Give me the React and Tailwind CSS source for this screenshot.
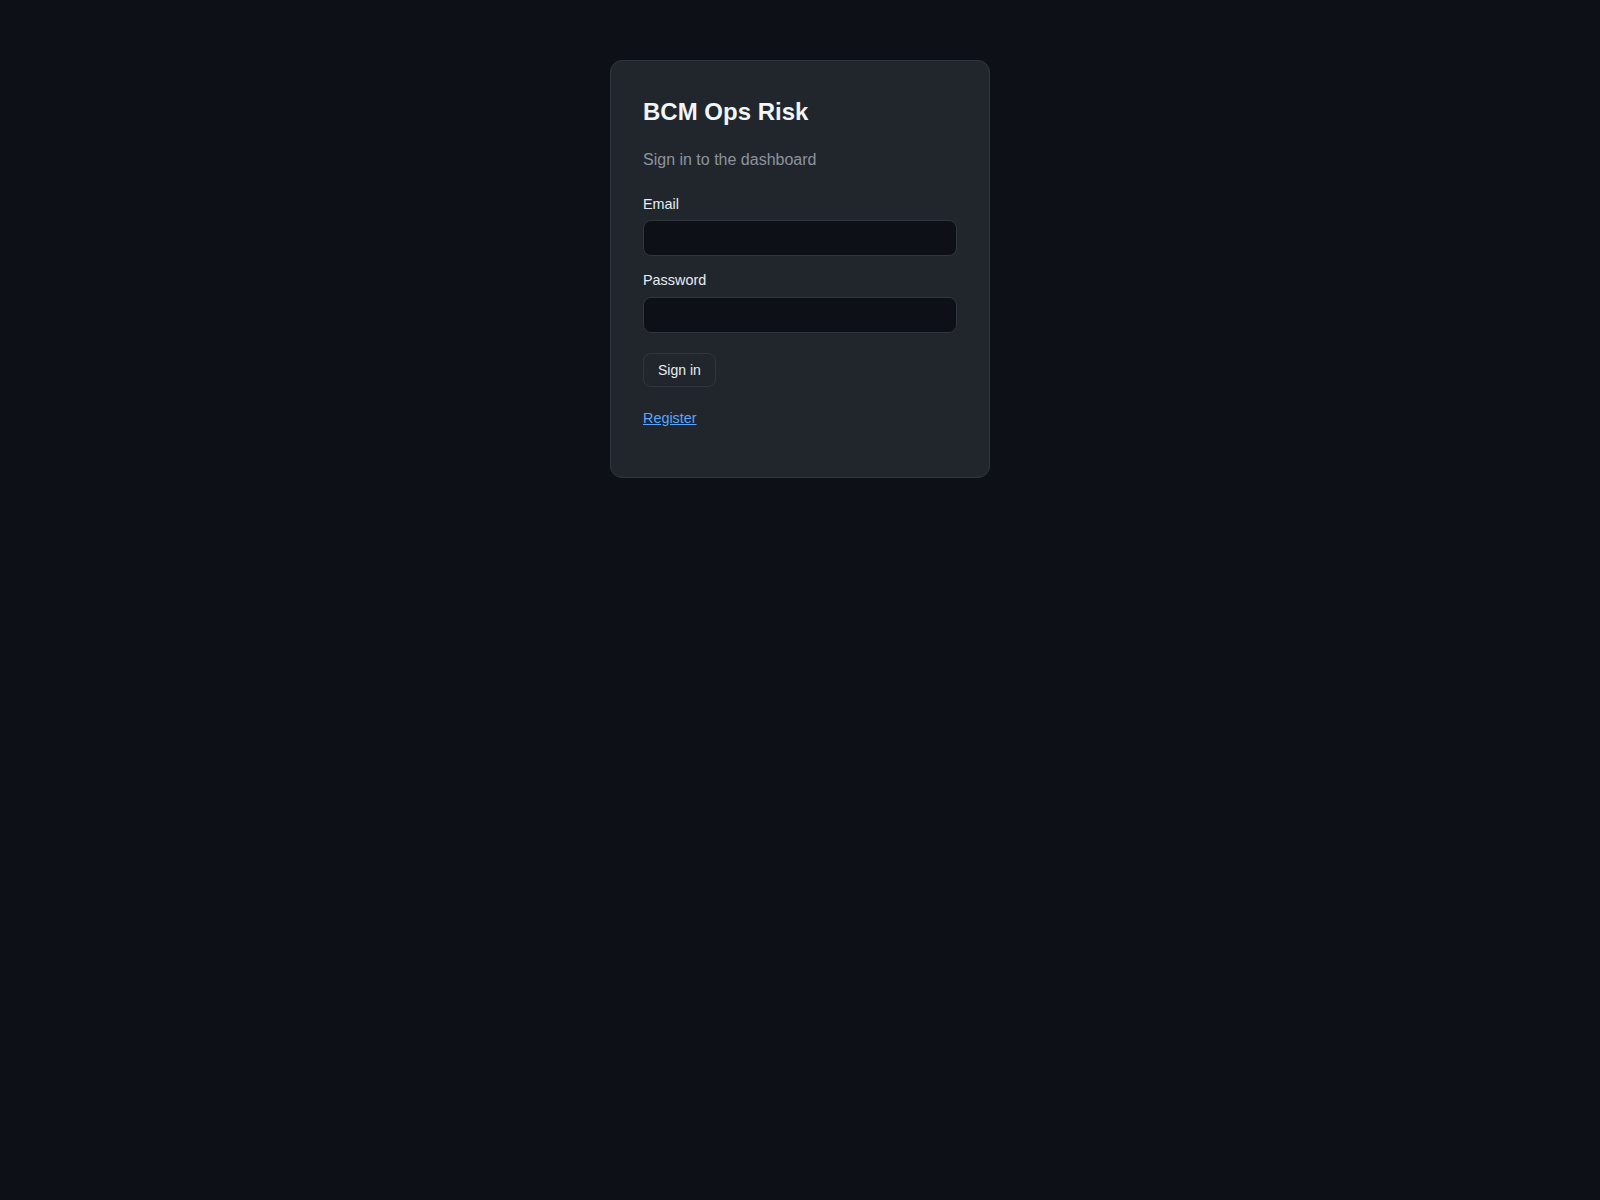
export default function App() {
  return (
    <div
      className="min-h-screen bg-[#0d1117] flex justify-center pt-[60px]"
      style={{ fontFamily: "'Liberation Sans', Arial, sans-serif" }}
    >
      <div className="w-[380px] h-[418px] bg-[#21262d] border border-[#30363d] rounded-xl px-8 pt-8 pb-8 self-start">
        <h1 className="mt-[1px] text-[24px] leading-[36px] font-bold text-[#f0f6fc]">
          BCM Ops Risk
        </h1>
        <p className="mt-[18px] text-[16px] leading-[24px] text-[#8b949e]">
          Sign in to the dashboard
        </p>

        <form className="mt-[22px] flex flex-col" onSubmit={(e) => e.preventDefault()}>
          <label className="text-[14.4px] leading-[21px] text-[#e6edf3]">Email</label>
          <input
            type="email"
            className="mt-[5px] h-[36px] w-full bg-[#0d1117] border border-[#30363d] rounded-lg px-3 text-[14px] text-[#e6edf3] outline-none"
          />

          <label className="mt-[14px] text-[14.4px] leading-[21px] text-[#e6edf3]">Password</label>
          <input
            type="password"
            className="mt-[6px] h-[36px] w-full bg-[#0d1117] border border-[#30363d] rounded-lg px-3 text-[14px] text-[#e6edf3] outline-none"
          />

          <div className="mt-[20px]">
            <button
              type="submit"
              className="h-[34px] px-[14px] bg-[#21262d] border border-[#30363d] rounded-lg text-[14px] leading-[16px] text-[#e6edf3]"
            >
              Sign in
            </button>
          </div>
        </form>

        <p className="mt-[21px] text-[14.4px] leading-[21px]">
          <a href="#" className="text-[#58a6ff] underline">
            Register
          </a>
        </p>
      </div>
    </div>
  );
}
